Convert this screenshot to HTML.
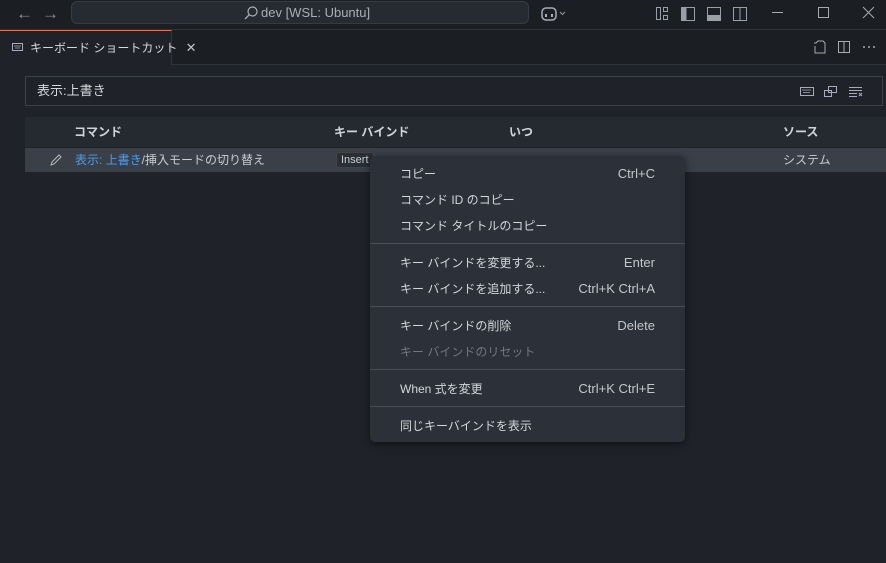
<!DOCTYPE html>
<html><head><meta charset="utf-8"><style>
*{margin:0;padding:0;box-sizing:border-box}
body{width:886px;height:563px;overflow:hidden;background:#1f2228;font-family:"Liberation Sans","Noto Sans CJK JP",sans-serif;font-size:13px;color:#c9ccd2;position:relative}
.a{position:absolute;white-space:nowrap}
.title{left:0;top:0;width:886px;height:30px;background:#1b1e23;border-bottom:1px solid #2f333a}
.search{left:71px;top:1px;width:458px;height:23px;background:#262a31;border:1px solid #363a42;border-radius:6px;line-height:21px;color:#a9adb5;font-size:13px}
.tabbar{left:0;top:30px;width:886px;height:35px;background:#1b1e23;border-bottom:1px solid #2f333a}
.tab{left:0;top:30px;width:172px;height:35px;background:#1f2228;border-top:1px solid #e2704a;border-right:1px solid #2f333a;line-height:33px;padding-left:30px;font-size:12px;color:#d6d8dc}
.input{left:25px;top:76px;width:858px;height:30px;border:1px solid #3c4048;background:#1f2228;line-height:28px;padding-left:11px;font-size:13px;color:#d6d8dc}
.hdr{left:25px;top:117px;width:861px;height:30px;background:#252930;line-height:30px;font-size:12px;color:#d0d3d8;font-weight:bold}
.row{left:25px;top:148px;width:861px;height:24px;background:#3a3f48;line-height:24px;font-size:12px}
.menu{left:370px;top:156px;width:315px;height:286px;background:#2c3038;border-radius:5px;box-shadow:0 2px 8px rgba(0,0,0,.5)}
.mi{position:absolute;left:30px;right:30px;height:26px;line-height:26px;font-size:12px;color:#d3d6db;white-space:nowrap}
.mi span{float:right;font-size:13px;color:#c3c6cc}
.sep{position:absolute;left:0;right:0;height:1px;background:#4a4e56}
svg{position:absolute}
</style></head><body>
<div class="a title"></div>
<div class="a" style="left:16px;top:4px;font-size:17px;color:#8c9099">←</div>
<div class="a" style="left:42px;top:4px;font-size:17px;color:#8c9099">→</div>
<div class="a search"><svg style="left:171px;top:3px" width="16" height="16" viewBox="0 0 16 16"><circle cx="9.5" cy="6.5" r="4.5" fill="none" stroke="#a9adb5" stroke-width="1.2"/><path d="M6.3 9.7L2 14" stroke="#a9adb5" stroke-width="1.3"/></svg><span class="a" style="left:189px">dev [WSL: Ubuntu]</span></div>
<svg style="left:540px;top:5px" width="32" height="18" viewBox="0 0 32 18"><rect x="2" y="3" width="14" height="12" rx="4" fill="none" stroke="#aab" stroke-width="1.5"/><rect x="5" y="9" width="2" height="3" fill="#aab"/><rect x="11" y="9" width="2" height="3" fill="#aab"/><path d="M20 7l2.5 2.5L25 7" fill="none" stroke="#999" stroke-width="1"/></svg>
<svg style="left:654px;top:6px" width="100" height="16" viewBox="0 0 100 16"><rect x="2.5" y="1.5" width="4" height="12" fill="none" stroke="#9a9ea6"/><rect x="9.5" y="1.5" width="4" height="4" fill="none" stroke="#9a9ea6"/><rect x="9.5" y="9.5" width="4" height="4" fill="none" stroke="#9a9ea6"/><rect x="27.5" y="1.5" width="13" height="13" fill="none" stroke="#9a9ea6"/><rect x="27.5" y="1.5" width="5" height="13" fill="#9a9ea6"/><rect x="53.5" y="1.5" width="13" height="13" fill="none" stroke="#9a9ea6"/><rect x="53.5" y="9" width="13" height="5.5" fill="#9a9ea6"/><rect x="79.5" y="1.5" width="13" height="13" fill="none" stroke="#9a9ea6"/><path d="M86 1.5v13" stroke="#9a9ea6"/></svg>
<svg style="left:765px;top:2px" width="120" height="22" viewBox="0 0 120 22"><path d="M7 10.5h11" stroke="#aaa"/><rect x="53.5" y="5.5" width="10" height="10" fill="none" stroke="#aaa"/><path d="M98 5l11 11M109 5l-11 11" stroke="#aaa"/></svg>
<div class="a tabbar"></div>
<div class="a tab">キーボード ショートカット <span style="margin-left:5px;color:#c0c3c8;font-size:13px">✕</span></div>
<svg style="left:12px;top:42px" width="12" height="10" viewBox="0 0 12 10"><rect x="0.5" y="1.5" width="10" height="7" fill="none" stroke="#aab"/><path d="M2 4h7M3 6h5" stroke="#aab" stroke-width=".8"/></svg>
<svg style="left:810px;top:39px" width="70" height="16" viewBox="0 0 70 16"><path d="M4 4h2l2-2h5l2 2v10H5V7" fill="none" stroke="#aaa"/><rect x="28.5" y="2.5" width="11" height="11" fill="none" stroke="#aaa"/><path d="M34 2.5v11" stroke="#aaa"/><circle cx="54" cy="8" r="1" fill="#aaa"/><circle cx="59" cy="8" r="1" fill="#aaa"/><circle cx="64" cy="8" r="1" fill="#aaa"/></svg>
<div class="a input">表示:上書き</div>
<svg style="left:798px;top:83px" width="70" height="16" viewBox="0 0 70 16"><rect x="2.5" y="4.5" width="13" height="8" fill="none" stroke="#aab"/><path d="M4 7h9M5 9.5h7" stroke="#aab" stroke-width=".8"/><rect x="26.5" y="7.5" width="7" height="6" fill="none" stroke="#aab"/><rect x="30.5" y="3.5" width="8" height="6" fill="none" stroke="#aab"/><path d="M51 4.5h13M51 7.5h13M51 10.5h8M51 13.5h8M61 10l3 3M64 10l-3 3" stroke="#aab"/></svg>
<div class="a hdr"><span class="a" style="left:49px">コマンド</span><span class="a" style="left:309px">キー バインド</span><span class="a" style="left:484px">いつ</span><span class="a" style="left:758px">ソース</span></div>
<div class="a row"><svg style="left:24px;top:5px" width="14" height="14" viewBox="0 0 14 14"><path d="M2 12l1-3 7-7 2 2-7 7z" fill="none" stroke="#bbb"/></svg><span class="a" style="left:50px"><span style="color:#4d9cf0">表示: 上書き</span>/挿入モードの切り替え</span><span class="a" style="left:311px;top:4px;height:16px;line-height:15px;padding:0 4px;background:#2a2e35;border:1px solid #444;border-radius:3px;font-size:11px">Insert</span><span class="a" style="left:758px">システム</span></div>
<div class="a menu">
<div class="mi" style="top:5px">コピー<span>Ctrl+C</span></div>
<div class="mi" style="top:31px">コマンド ID のコピー</div>
<div class="mi" style="top:57px">コマンド タイトルのコピー</div>
<div class="sep" style="top:87px"></div>
<div class="mi" style="top:94px">キー バインドを変更する...<span>Enter</span></div>
<div class="mi" style="top:120px">キー バインドを追加する...<span>Ctrl+K Ctrl+A</span></div>
<div class="sep" style="top:150px"></div>
<div class="mi" style="top:157px">キー バインドの削除<span>Delete</span></div>
<div class="mi" style="top:183px;color:#72767e">キー バインドのリセット</div>
<div class="sep" style="top:213px"></div>
<div class="mi" style="top:220px">When 式を変更<span>Ctrl+K Ctrl+E</span></div>
<div class="sep" style="top:250px"></div>
<div class="mi" style="top:257px">同じキーバインドを表示</div>
</div>
</body></html>
